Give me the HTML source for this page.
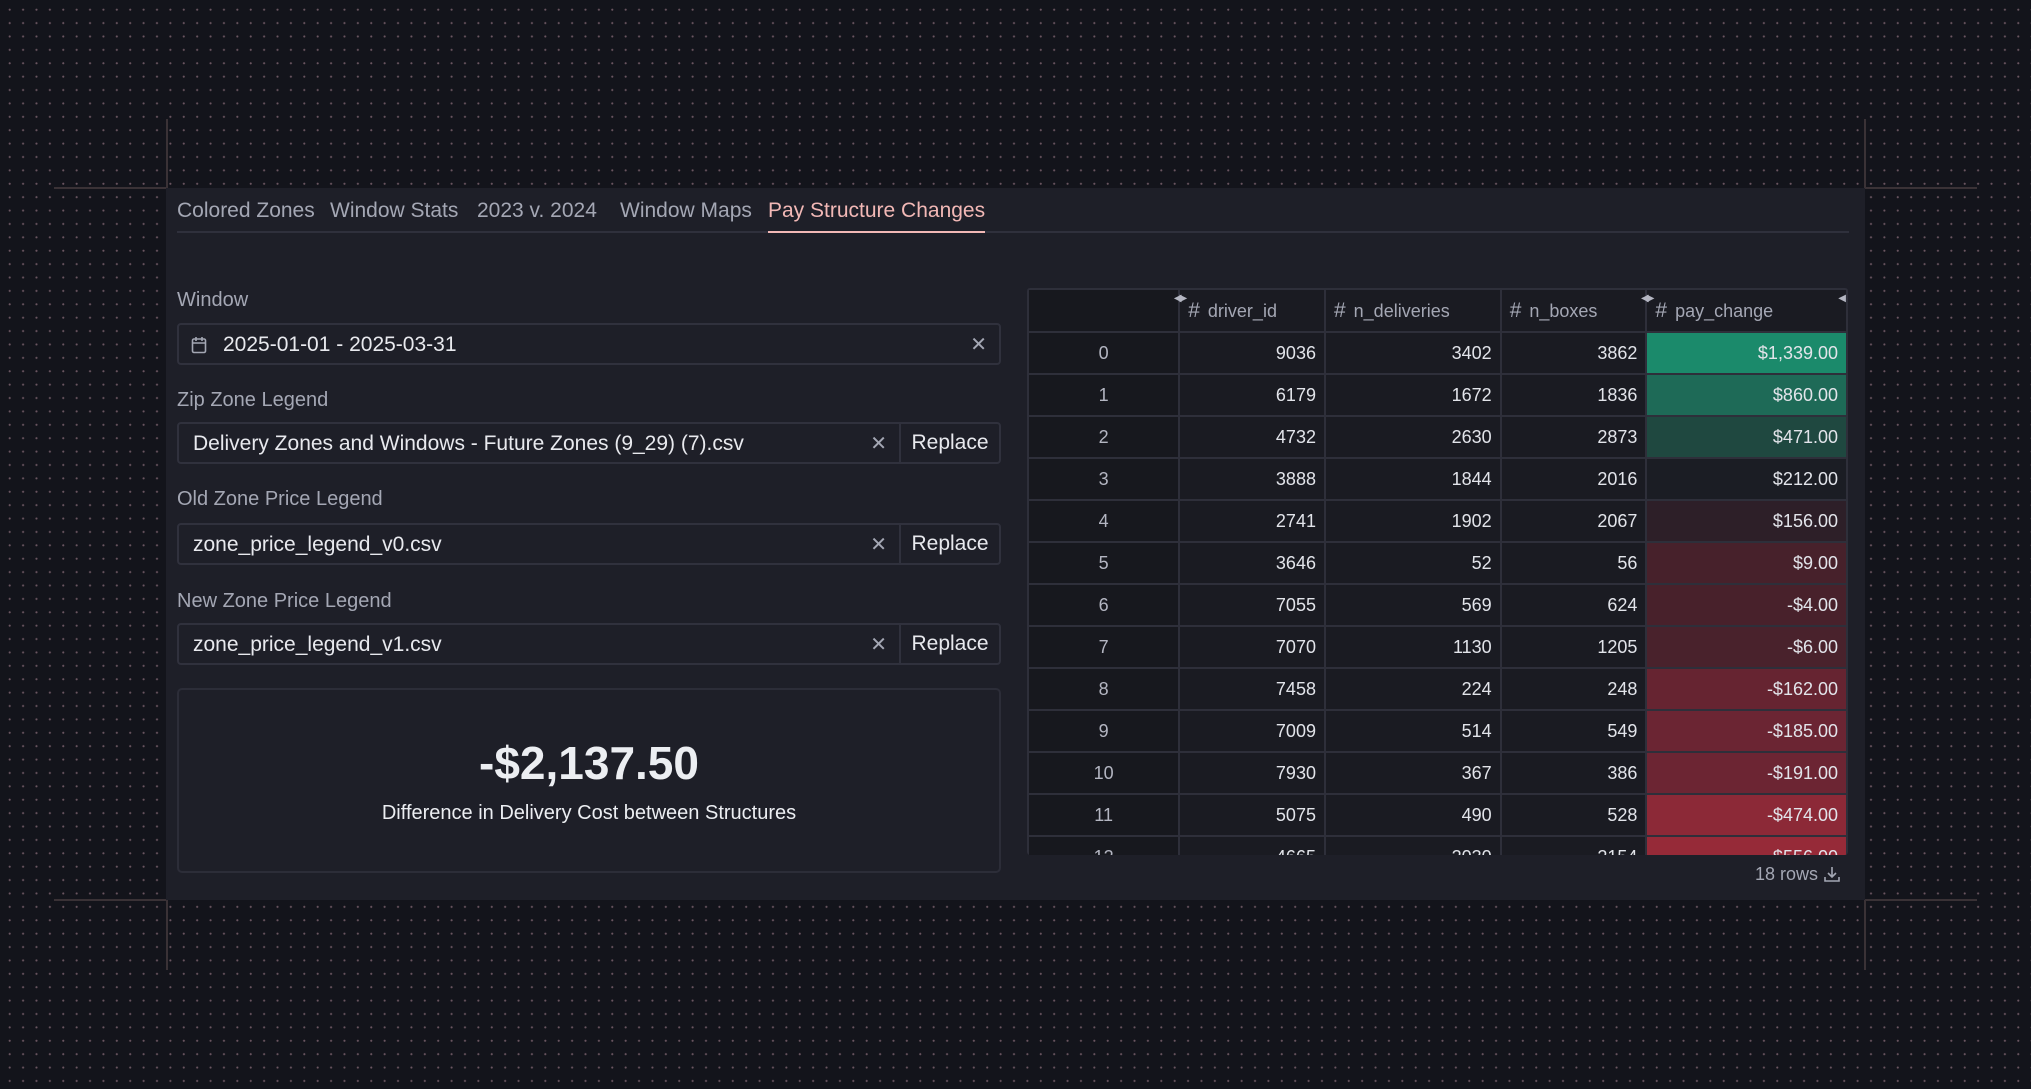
<!DOCTYPE html>
<html><head><meta charset="utf-8"><style>
*{box-sizing:border-box;margin:0;padding:0}
body{width:2031px;height:1089px;overflow:hidden;background:#13141b;font-family:"Liberation Sans",sans-serif;position:relative;
background-image:radial-gradient(circle,#6a5560 0.9px,transparent 1.2px);background-size:13.4px 13.4px;background-position:3px 3px}
.ln{position:absolute;background:#3a3236}
.panel{position:absolute;left:166px;top:188px;width:1699px;height:712px;background:#1e1f28}
.tabs{position:absolute;left:11px;top:0;width:1672px;height:45px;border-bottom:2px solid #2f303c}
.tab{position:absolute;top:11px;font-size:21px;color:#a4a7b4;white-space:nowrap}
.tab.on{color:#f2b8b6;border-bottom:2px solid #f2b8b6;padding-bottom:8px}
.lbl{position:absolute;left:11px;font-size:20px;color:#a4a7b4}
.inp{position:absolute;left:11px;width:824px;height:42px;border:2px solid #30313d;border-radius:4px;color:#e8e9ee;font-size:21px}
.inp .t{position:absolute;left:14px;top:8px;white-space:nowrap}
.inp .x{position:absolute;top:7px;color:#a4a7b4;font-size:20px}
.inp .rep{position:absolute;right:0;top:0;width:100px;height:38px;border-left:2px solid #30313d;text-align:center;line-height:38px}
.metric{position:absolute;left:11px;top:500px;width:824px;height:185px;border:2px solid #2c2d38;border-radius:5px;text-align:center;color:#eceef2}
table{position:absolute;left:861px;top:100px;border-collapse:collapse;font-size:18px;color:#e2e4ea;background:#1a1b22}
td,th{height:42px;border:2px solid #2e2f3a;padding:0 8px;text-align:right;font-weight:normal}
th{height:43px;text-align:left;color:#a4a7b4;font-size:18px;position:relative}
th b{font-weight:normal;font-size:21px;margin-right:8px}
td.i{text-align:center;color:#b4b6c2;background:#17181e}
.rs{position:absolute;top:3px;color:#b4b6c2;font-size:10px;letter-spacing:-2px}
</style></head><body>
<div class="ln" style="left:166px;top:119px;width:2px;height:69px"></div>
<div class="ln" style="left:54px;top:187px;width:112px;height:2px"></div>
<div class="ln" style="left:1864px;top:119px;width:2px;height:69px"></div>
<div class="ln" style="left:1865px;top:187px;width:112px;height:2px"></div>
<div class="ln" style="left:166px;top:900px;width:2px;height:70px"></div>
<div class="ln" style="left:54px;top:899px;width:112px;height:2px"></div>
<div class="ln" style="left:1864px;top:900px;width:2px;height:70px"></div>
<div class="ln" style="left:1865px;top:899px;width:112px;height:2px"></div>
<div class="panel">
<div class="tabs">
<span class="tab" style="left:0">Colored Zones</span>
<span class="tab" style="left:153px">Window Stats</span>
<span class="tab" style="left:300px">2023 v. 2024</span>
<span class="tab" style="left:443px">Window Maps</span>
<span class="tab on" style="left:591px">Pay Structure Changes</span>
</div>
<div class="lbl" style="top:101px">Window</div>
<div class="inp" style="top:135px"><svg style="position:absolute;left:12px;top:11px" width="16" height="18" viewBox="0 0 16 18" fill="none" stroke="#a4a7b4" stroke-width="1.6"><rect x="1.5" y="3" width="13" height="13.5" rx="1.5"/><path d="M1.5 7h13M5 1v4M11 1v4"/></svg><span class="t" style="left:44px">2025-01-01 - 2025-03-31</span><span class="x" style="right:12px">✕</span></div>
<div class="lbl" style="top:201px">Zip Zone Legend</div>
<div class="inp" style="top:234px"><span class="t">Delivery Zones and Windows - Future Zones (9_29) (7).csv</span><span class="x" style="right:112px">✕</span><span class="rep">Replace</span></div>
<div class="lbl" style="top:300px">Old Zone Price Legend</div>
<div class="inp" style="top:335px"><span class="t">zone_price_legend_v0.csv</span><span class="x" style="right:112px">✕</span><span class="rep">Replace</span></div>
<div class="lbl" style="top:402px">New Zone Price Legend</div>
<div class="inp" style="top:435px"><span class="t">zone_price_legend_v1.csv</span><span class="x" style="right:112px">✕</span><span class="rep">Replace</span></div>
<div class="metric"><div style="margin-top:46px;font-size:46px;font-weight:bold">-$2,137.50</div><div style="margin-top:12px;font-size:20px">Difference in Delivery Cost between Structures</div></div>
<div style="position:absolute;left:861px;top:100px;width:821px;height:567px;overflow:hidden;border-radius:3px">
<table style="left:0;top:0;width:821px">
<tr><th style="width:152px;background:#17181e"><span class="rs" style="right:-7px">◀▶</span></th><th style="width:146px"><b>#</b>driver_id</th><th style="width:176px"><b>#</b>n_deliveries</th><th style="width:146px"><b>#</b>n_boxes<span class="rs" style="right:-7px">◀▶</span></th><th style="width:201px"><b>#</b>pay_change<span class="rs" style="right:2px">◀</span></th></tr>
<tr><td class="i">0</td><td>9036</td><td>3402</td><td>3862</td><td style="background:#1b8a6b">$1,339.00</td></tr>
<tr><td class="i">1</td><td>6179</td><td>1672</td><td>1836</td><td style="background:#1e6a57">$860.00</td></tr>
<tr><td class="i">2</td><td>4732</td><td>2630</td><td>2873</td><td style="background:#1f4840">$471.00</td></tr>
<tr><td class="i">3</td><td>3888</td><td>1844</td><td>2016</td><td style="background:#1b1d24">$212.00</td></tr>
<tr><td class="i">4</td><td>2741</td><td>1902</td><td>2067</td><td style="background:#2d1f28">$156.00</td></tr>
<tr><td class="i">5</td><td>3646</td><td>52</td><td>56</td><td style="background:#47212b">$9.00</td></tr>
<tr><td class="i">6</td><td>7055</td><td>569</td><td>624</td><td style="background:#48212b">-$4.00</td></tr>
<tr><td class="i">7</td><td>7070</td><td>1130</td><td>1205</td><td style="background:#49222c">-$6.00</td></tr>
<tr><td class="i">8</td><td>7458</td><td>224</td><td>248</td><td style="background:#662431">-$162.00</td></tr>
<tr><td class="i">9</td><td>7009</td><td>514</td><td>549</td><td style="background:#6b2533">-$185.00</td></tr>
<tr><td class="i">10</td><td>7930</td><td>367</td><td>386</td><td style="background:#6c2533">-$191.00</td></tr>
<tr><td class="i">11</td><td>5075</td><td>490</td><td>528</td><td style="background:#8c2937">-$474.00</td></tr>
<tr><td class="i">12</td><td>4665</td><td>2030</td><td>2154</td><td style="background:#962a38">-$556.00</td></tr>
</table></div>
<div style="position:absolute;right:24px;top:676px;font-size:18px;color:#a4a7b4">18 rows <svg width="18" height="18" viewBox="0 0 18 18" fill="none" stroke="#a4a7b4" stroke-width="1.6" style="vertical-align:-3px"><path d="M9 2v10M5 8l4 4 4-4M2 12v4h14v-4"/></svg></div>
</div>
</body></html>
